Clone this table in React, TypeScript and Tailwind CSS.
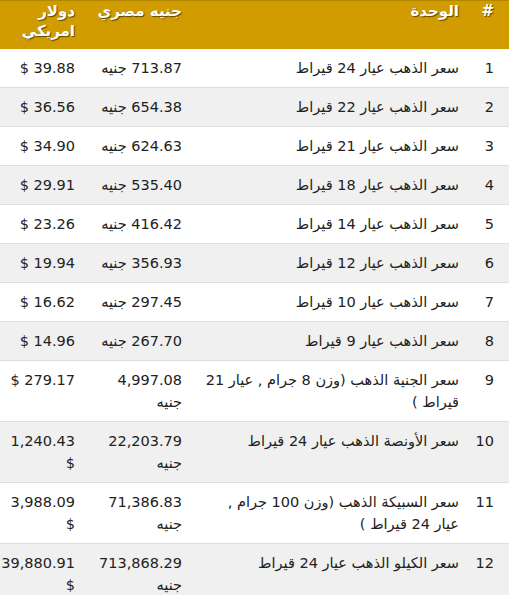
import React from 'react';

type Row = {
  id: number;
  unit: string;
  egp: string;
  usd: string;
};

const rows: Row[] = [
  { id: 1, unit: 'سعر الذهب عيار 24 قيراط', egp: '713.87', usd: '39.88' },
  { id: 2, unit: 'سعر الذهب عيار 22 قيراط', egp: '654.38', usd: '36.56' },
  { id: 3, unit: 'سعر الذهب عيار 21 قيراط', egp: '624.63', usd: '34.90' },
  { id: 4, unit: 'سعر الذهب عيار 18 قيراط', egp: '535.40', usd: '29.91' },
  { id: 5, unit: 'سعر الذهب عيار 14 قيراط', egp: '416.42', usd: '23.26' },
  { id: 6, unit: 'سعر الذهب عيار 12 قيراط', egp: '356.93', usd: '19.94' },
  { id: 7, unit: 'سعر الذهب عيار 10 قيراط', egp: '297.45', usd: '16.62' },
  { id: 8, unit: 'سعر الذهب عيار 9 قيراط', egp: '267.70', usd: '14.96' },
  { id: 9, unit: 'سعر الجنية الذهب (وزن 8 جرام , عيار 21 قيراط )', egp: '4,997.08', usd: '279.17' },
  { id: 10, unit: 'سعر الأونصة الذهب عيار 24 قيراط', egp: '22,203.79', usd: '1,240.43' },
  { id: 11, unit: 'سعر السبيكة الذهب (وزن 100 جرام , عيار 24 قيراط )', egp: '71,386.83', usd: '3,988.09' },
  { id: 12, unit: 'سعر الكيلو الذهب عيار 24 قيراط', egp: '713,868.29', usd: '39,880.91' },
];

const th = 'align-top text-right font-bold text-white leading-[20px] pt-0 pb-2 [text-shadow:1px_1px_1px_rgba(0,0,0,0.55)]';
const td = 'align-top text-right leading-[22px] py-2';

export default function App() {
  return (
    <div className="w-[509px] h-[595px] overflow-hidden bg-white" style={{ fontFamily: '"DejaVu Sans", sans-serif' }}>
      <table dir="rtl" className="w-[509px] table-fixed border-collapse text-[14.5px] text-[#222]">
        <colgroup>
          <col className="w-[42px]" />
          <col className="w-[277px]" />
          <col className="w-[107px]" />
          <col className="w-[83px]" />
        </colgroup>
        <thead>
          <tr className="bg-[#d09c00] border-t border-[#b38600]">
            <th className={`${th} text-[15px] pr-[15px] pl-1`}>#</th>
            <th className={`${th} text-[15px] px-2`}>الوحدة</th>
            <th className={`${th} text-[15px] px-2`}>جنيه مصري</th>
            <th className={`${th} text-[15px] pr-2 pl-0`}>دولار امريكي</th>
          </tr>
        </thead>
        <tbody>
          {rows.map((r) => (
            <tr
              key={r.id}
              className={`border-b border-[#dedede] ${r.id % 2 === 0 ? 'bg-[#f0f0f0]' : 'bg-white'}`}
            >
              <td className={`${td} pr-[15px] pl-1`}>{r.id}</td>
              <td className={`${td} pr-2 pl-3`}>{r.unit}</td>
              <td className={`${td} px-2`}>{r.egp} جنيه</td>
              <td className={`${td} pr-2 pl-0`}>{r.usd} $</td>
            </tr>
          ))}
        </tbody>
      </table>
    </div>
  );
}
